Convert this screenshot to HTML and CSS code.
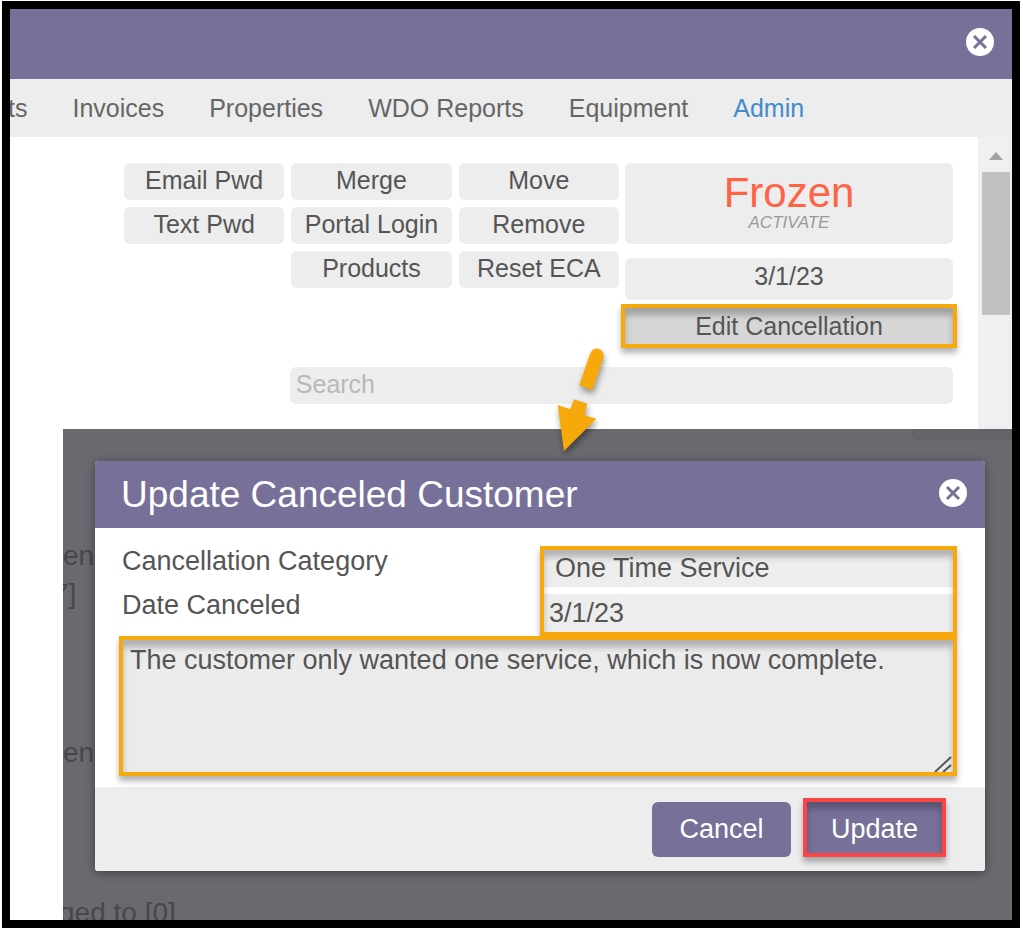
FILE: index.html
```html
<!DOCTYPE html>
<html lang="en">
<head>
  <meta charset="UTF-8">
  <title>Update Canceled Customer</title>
  <link rel="stylesheet" href="styles.css">
</head>
<body>

<div class="frame">
  <header class="topbar">
    <button type="button" class="close" aria-label="Close">
      <svg viewBox="0 0 28 28"><circle cx="14" cy="14" r="14" fill="#fff"/><path d="M8 8l12 12M20 8L8 20" stroke="#777099" stroke-width="3"/></svg>
    </button>
  </header>

  <nav class="tabs">
    <a href="#">ts</a>
    <a href="#">Invoices</a>
    <a href="#">Properties</a>
    <a href="#">WDO Reports</a>
    <a href="#">Equipment</a>
    <a href="#" class="active">Admin</a>
  </nav>

  <div class="panel">
    <div class="admin">
      <div class="actions">
        <button type="button">Email Pwd</button>
        <button type="button">Merge</button>
        <button type="button">Move</button>
        <button type="button">Text Pwd</button>
        <button type="button">Portal Login</button>
        <button type="button">Remove</button>
        <button type="button" class="second">Products</button>
        <button type="button">Reset ECA</button>
      </div>
      <div class="status">
        <button type="button" class="frozen">Frozen <em>ACTIVATE</em></button>
        <button type="button" class="date">3/1/23</button>
        <button type="button" class="edit highlight">Edit Cancellation</button>
      </div>
      <input type="text" class="search" placeholder="Search" aria-label="Search">
    </div>
    <div class="scrollbar">
      <svg viewBox="0 0 16 9"><path d="M0 9L8 0l8 9z" fill="#a3a3a3"/></svg>
      <div class="thumb"></div>
    </div>
  </div>

  <div class="backdrop">
    <span class="behind behind-box"></span>
    <span class="behind line1">en</span>
    <span class="behind line2">7]</span>
    <span class="behind line3">en</span>
    <span class="behind line4">ged to [0]</span>

    <form class="modal">
      <div class="modal-header">
        <h1>Update Canceled Customer</h1>
        <button type="button" class="close" aria-label="Close">
          <svg viewBox="0 0 28 28"><circle cx="14" cy="14" r="14" fill="#fff"/><path d="M8 8l12 12M20 8L8 20" stroke="#777099" stroke-width="3"/></svg>
        </button>
      </div>

      <div class="modal-body">
        <div class="fields">
          <div class="labels">
            <label for="category">Cancellation Category</label>
            <label for="canceled">Date Canceled</label>
          </div>
          <div class="inputs highlight">
            <select id="category" name="category">
              <option>One Time Service</option>
            </select>
            <input type="text" id="canceled" name="canceled" value="3/1/23">
          </div>
        </div>
        <div class="note highlight">
          <textarea name="note" aria-label="Note">The customer only wanted one service, which is now complete.</textarea>
          <svg class="grip" viewBox="0 0 18 16"><path d="M1 16L17 1M9 16l8-7" stroke="#555" stroke-width="2" fill="none"/></svg>
        </div>
      </div>

      <div class="modal-footer">
        <button type="button">Cancel</button>
        <button type="submit" class="update highlight">Update</button>
      </div>
    </form>
  </div>

  <svg class="arrow" viewBox="0 0 240 360">
    <path d="M118 136L150 42Q158 24 174 26Q192 30 191 50L157 151z" fill="#f7a90b"/>
    <path d="M102 178L142 191L133 226L169 236L72 333L53 195L91 208z" fill="#f7a90b"/>
  </svg>
</div>

</body>
</html>
```

FILE: styles.css
```css
* {
  box-sizing: border-box;
}
body {
  margin: 0;
  padding: 1px 3px 2px 2px;
  min-height: 100vh;
  display: flex;
  background: #fff;
  font-family: "Liberation Sans", Arial, sans-serif;
  font-size: 25px;
  color: #555;
}
button, input, select, textarea {
  font: inherit;
  color: inherit;
  border: 0;
  margin: 0;
}
.frame {
  position: relative;
  flex: 1;
  min-width: 0;
  display: flex;
  flex-direction: column;
  border: 8px solid #000;
  overflow: hidden;
}

/* top bar and tabs */
.topbar {
  display: flex;
  align-items: center;
  justify-content: flex-end;
  height: 70px;
  padding: 0 18px 4px;
  background: #777099;
}
.close {
  display: flex;
  padding: 0;
  background: none;
}
.close svg {
  width: 28px;
  height: 28px;
}
.tabs {
  display: flex;
  gap: 45px;
  height: 58px;
  line-height: 58px;
  background: #ededed;
}
.tabs a {
  color: #666;
  text-decoration: none;
  white-space: nowrap;
}
.tabs a:first-child {
  margin-left: -2px;
}
.tabs .active {
  color: #428bca;
}

/* admin panel */
.panel {
  display: flex;
}
.admin {
  flex: 1;
  display: grid;
  grid-template-columns: 495fr 328fr;
  gap: 19px 6px;
  align-items: start;
  padding: 26px 25px 25px 114px;
}
.actions {
  display: grid;
  grid-template-columns: repeat(3, 1fr);
  gap: 7px;
}
.actions button, .status button, .search {
  height: 37px;
  padding: 0 0 2px;
  border-radius: 6px;
  background: #ededed;
  white-space: nowrap;
}
.actions .second {
  grid-column: 2;
}
.status {
  display: flex;
  flex-direction: column;
}
.status .frozen {
  height: 81px;
  padding-bottom: 4px;
  margin-bottom: 14px;
  font-size: 42px;
  line-height: 42px;
  color: #ff6347;
}
.frozen em {
  display: block;
  font-size: 17px;
  line-height: 18px;
  color: #999;
}
.status .date {
  height: 42px;
  padding-bottom: 6px;
}
.highlight {
  position: relative;
  border: 4px solid #f7a90b;
  box-shadow: 0 5px 6px rgba(0, 0, 0, .3);
}
.highlight::after {
  content: "";
  position: absolute;
  inset: 0;
  box-shadow: inset 0 7px 6px rgba(0, 0, 0, .25);
  pointer-events: none;
}
.status .edit {
  height: 44px;
  padding: 0;
  margin: 4px -4px 0;
  border-radius: 0;
  background: #d6d6d6;
}
.search {
  grid-column: 1 / 3;
  justify-self: end;
  width: 80%;
  padding: 0 6px 2px;
}
.search::placeholder {
  color: #b8b8b8;
}
.scrollbar {
  width: 34px;
  padding: 15px 2px 0 4px;
  background: #f0f0f0;
}
.scrollbar svg {
  display: block;
  width: 16px;
  height: 8px;
  margin: 0 auto 12px 6px;
}
.thumb {
  height: 143px;
  background: #c1c1c1;
}

/* dimmed page with the dialog over it */
.backdrop {
  position: relative;
  flex: 1;
  margin-left: 53px;
  padding: 32px 27px 49px 32px;
  background: #696a6f;
  overflow: hidden;
}
.behind {
  position: absolute;
  font-size: 28px;
  line-height: 30px;
  color: #46474c;
}
.behind-box {
  top: 0;
  right: 0;
  width: 100px;
  height: 11px;
  border-radius: 0 0 0 6px;
  background: #636469;
}
.line1 {
  top: 112px;
  left: 0;
}
.line2 {
  top: 150px;
  left: -10px;
}
.line3 {
  top: 309px;
  left: 0;
}
.line4 {
  top: 469px;
  left: -4px;
}
.modal {
  position: relative;
  border-radius: 3px;
  background: #fff;
  box-shadow: 0 2px 10px rgba(0, 0, 0, .4);
  overflow: hidden;
}
.modal-header {
  display: flex;
  align-items: center;
  justify-content: space-between;
  height: 67px;
  padding: 0 18px 4px 26px;
  background: #777099;
}
h1 {
  margin: 0;
  padding-top: 4px;
  font-size: 37px;
  font-weight: normal;
  color: #fff;
}
.modal-body {
  padding: 11px 28px 11px 24px;
  font-size: 27px;
}
.fields {
  display: grid;
  grid-template-columns: 421fr 417fr;
}
.labels {
  padding-left: 3px;
}
.labels label {
  display: block;
  line-height: 44px;
}
.inputs {
  display: flex;
  flex-direction: column;
  gap: 7px;
  margin-top: 7px;
}
.inputs select, .inputs input {
  width: 100%;
  height: 38px;
  padding: 0 5px;
  background: #ededed;
}
.inputs select {
  appearance: none;
  height: 37px;
  padding: 0 11px 2px;
}
.note textarea {
  display: block;
  width: 100%;
  height: 132px;
  padding: 5px 7px;
  background: #ebebeb;
  resize: none;
}
.grip {
  position: absolute;
  right: 1px;
  bottom: 0;
  width: 18px;
  height: 16px;
}
.modal-footer {
  display: flex;
  justify-content: flex-end;
  align-items: flex-start;
  gap: 12px;
  padding: 11px 39px 14px;
  background: #ededed;
}
.modal-footer button {
  width: 139px;
  height: 55px;
  margin-top: 4px;
  border-radius: 6px;
  background: #777099;
  color: #fff;
  font-size: 27px;
}
.modal-footer .update {
  width: 143px;
  height: 59px;
  padding-top: 4px;
  margin-top: 0;
  border: 4px solid #fb4448;
  border-radius: 0;
}

.arrow {
  position: absolute;
  top: 331px;
  right: 392px;
  width: 80px;
  height: 120px;
  filter: drop-shadow(1px 4px 3px rgba(0, 0, 0, .4));
}
```
